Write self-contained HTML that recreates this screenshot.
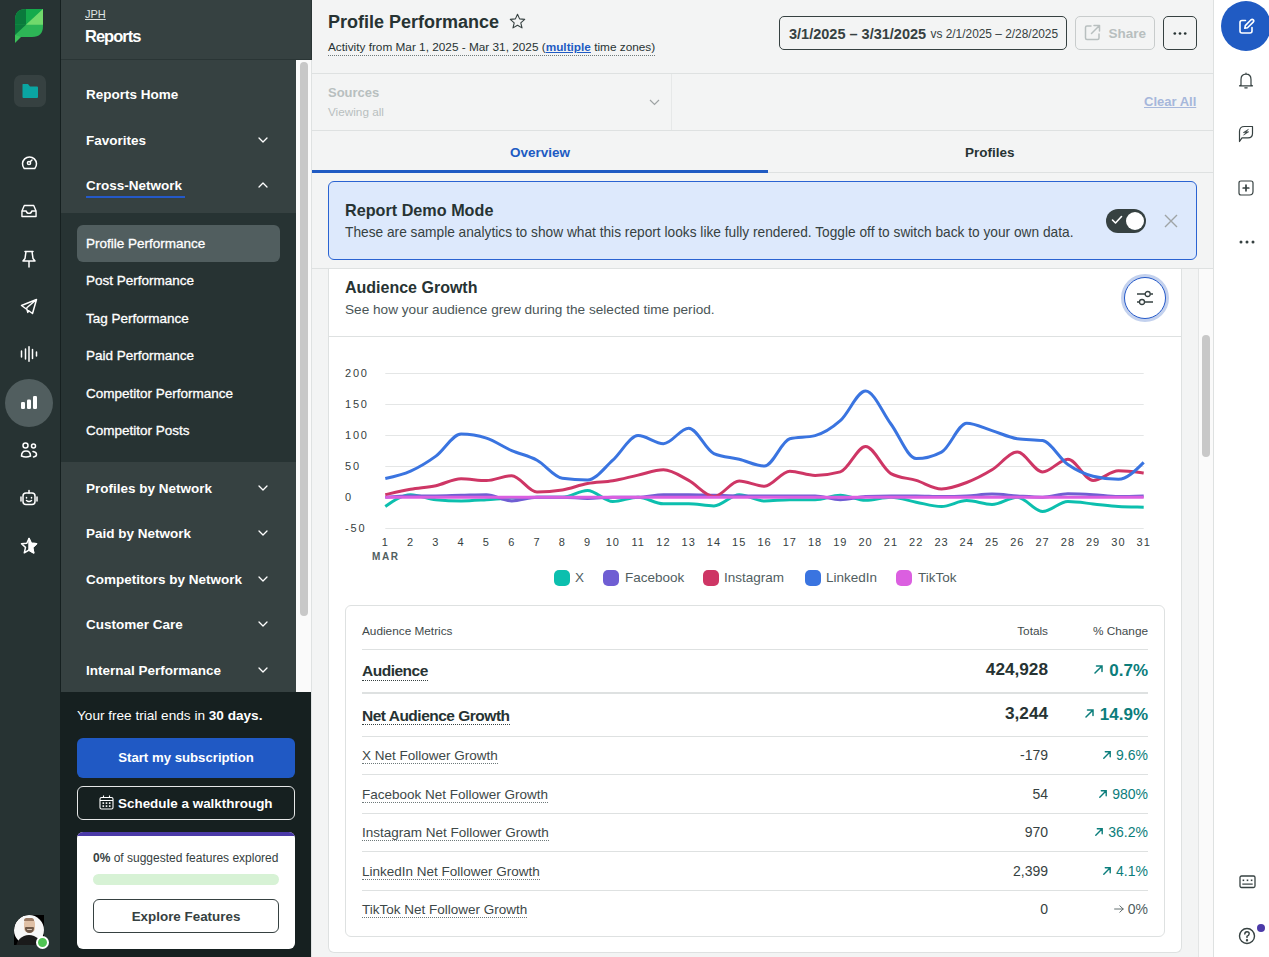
<!DOCTYPE html>
<html><head><meta charset="utf-8">
<style>
*{box-sizing:border-box;margin:0;padding:0}
html,body{width:1269px;height:957px;overflow:hidden;background:#f3f4f4;font-family:"Liberation Sans",sans-serif;}
.abs{position:absolute}
.t{position:absolute;white-space:nowrap;line-height:1}
#rail{left:0;top:0;width:61px;height:957px;background:#273333;border-right:1px solid #162020}
#panel{left:61px;top:0;width:250px;height:957px;background:#364141;overflow:hidden}
#main{left:311px;top:0;width:902px;height:957px;background:#f3f4f4;overflow:hidden}
#rrail{left:1213px;top:0;width:56px;height:957px;background:#fff;border-left:1px solid #dee1e1}
.nv{color:#fff;font-weight:bold;font-size:13.5px;left:25px}
.sub{color:#fff;font-size:13.5px;left:25px;-webkit-text-stroke:0.3px #fff}
.chev{position:absolute;left:197px;width:10px;height:6px}
</style></head><body>
<div id="rail" class="abs">
  <svg class="abs" style="left:15px;top:9px" width="28" height="34" viewBox="0 0 28 34">
    <defs><clipPath id="lc"><path d="M0 11 Q0 0 11 0 L28 0 L28 17 Q28 28 17 28 L0 28 Z"/></clipPath></defs>
    <g clip-path="url(#lc)">
      <rect x="0" y="0" width="28" height="28" fill="#2db556"/>
      <path d="M0 0 L11 0 L11 15.8 L0 15.8 Z" fill="#0a7a3c"/>
      <path d="M11 0 L28 0 L11 15.8 Z" fill="#15aa4c"/>
      <path d="M28 0 L28 15.8 L11 15.8 Z" fill="#72d96c"/>
      <path d="M0 15.8 L11 15.8 L0 26 Z" fill="#0a7a3c"/>
    </g>
    <path d="M0 26 L0 34 L6 28 Z" fill="#3cc25a"/>
  </svg>
  <div class="abs" style="left:14px;top:75px;width:32px;height:32px;border-radius:7px;background:#364141"></div>
  <svg class="abs" style="left:21px;top:83px" width="18" height="16" viewBox="0 0 18 16"><path d="M1.5 1.5 Q1.5 1 2 1 L7 1 L9 3.5 L16 3.5 Q17 3.5 17 4.5 L17 14 Q17 15 16 15 L2.5 15 Q1.5 15 1.5 14 Z" fill="#0aa5a2"/></svg>
  <svg class="abs" style="left:20.5px;top:154px" width="17" height="17" viewBox="0 0 17 17" fill="none" stroke="#fff" stroke-width="1.5" stroke-linecap="round"><path d="M3.2 14.5 A7 7 0 1 1 13.8 14.5 Z"/><circle cx="8" cy="9" r="1.6"/><path d="M9.2 7.8 L11 6"/></svg>
  <svg class="abs" style="left:21px;top:204px" width="16" height="14" viewBox="0 0 17 14" fill="none" stroke="#fff" stroke-width="1.5" stroke-linejoin="round"><path d="M1 7 L3.5 1.2 L13.5 1.2 L16 7 L16 12.8 L1 12.8 Z"/><path d="M1 7 L5.5 7 Q6 9.5 8.5 9.5 Q11 9.5 11.5 7 L16 7"/></svg>
  <svg class="abs" style="left:21px;top:250px" width="16" height="18" viewBox="0 0 16 18" fill="none" stroke="#fff" stroke-width="1.5" stroke-linejoin="round" stroke-linecap="round"><path d="M4 1.5 L12 1.5 M5 1.5 L4 8.5 L2 11 L14 11 L12 8.5 L11 1.5 M8 11 L8 17"/></svg>
  <svg class="abs" style="left:20px;top:298px" width="18" height="17" viewBox="0 0 18 17" fill="none" stroke="#fff" stroke-width="1.5" stroke-linejoin="round"><path d="M1.5 7.5 L16.5 1.5 L12.5 15.5 Z M6.5 10 L16.5 1.5 M6.5 10 L8 15"/></svg>
  <svg class="abs" style="left:20px;top:346px" width="18" height="16" viewBox="0 0 18 16" stroke="#fff" stroke-width="1.5" stroke-linecap="round"><path d="M1.5 5 L1.5 11 M5.5 3 L5.5 13 M9 0.8 L9 15.2 M12.5 3.5 L12.5 12.5 M16.5 6 L16.5 10"/></svg>
  <div class="abs" style="left:5px;top:379px;width:48px;height:48px;border-radius:50%;background:#515e5f"></div>
  <svg class="abs" style="left:21px;top:396px" width="16" height="13" viewBox="0 0 16 13" fill="#fff"><rect x="0" y="6" width="4" height="7" rx="1.2"/><rect x="6" y="3.5" width="4" height="9.5" rx="1.2"/><rect x="12" y="0" width="4" height="13" rx="1.2"/></svg>
  <svg class="abs" style="left:20px;top:442px" width="18" height="17" viewBox="0 0 18 17" fill="none" stroke="#fff" stroke-width="1.5" stroke-linecap="round"><circle cx="5.5" cy="3.5" r="2.5"/><circle cx="13.5" cy="4" r="2"/><path d="M1.5 14 Q1.5 9 6 9 Q10.5 9 10.5 14 Q6 16 1.5 14 Z"/><path d="M13 9.5 Q16.5 10 16.5 12.5 Q16.5 14.5 13.5 15"/></svg>
  <svg class="abs" style="left:20px;top:489px" width="18" height="18" viewBox="0 0 18 18" fill="none" stroke="#fff" stroke-width="1.5" stroke-linecap="round"><rect x="3" y="4" width="12" height="11.5" rx="3"/><path d="M9 1.5 L9 4 M1 8 L1 12 M17 8 L17 12 M6.5 8.5 L6.5 9 M11.5 8.5 L11.5 9 M6.5 11.5 Q9 13.5 11.5 11.5"/></svg>
  <svg class="abs" style="left:20px;top:537px" width="18" height="18" viewBox="0 0 18 18" fill="none" stroke="#fff" stroke-width="1.5" stroke-linejoin="round"><path d="M9 1.5 L11.2 6.3 L16.5 6.8 L12.5 10.4 L13.7 15.8 L9 13 L4.3 15.8 L5.5 10.4 L1.5 6.8 L6.8 6.3 Z"/><path d="M9 1.5 L11.2 6.3 L16.5 6.8 L12.5 10.4 L13.7 15.8 L9 13 Z" fill="#fff"/></svg>
  <div class="abs" style="left:14px;top:915px;width:30px;height:30px;border-radius:15px 0 0 0;background:#000;overflow:hidden">
    <div class="abs" style="left:0;top:0;width:30px;height:30px;border-radius:50%;background:#f7f7f7"></div>
    <div class="abs" style="left:9.5px;top:3px;width:11px;height:15px;border-radius:5.5px 5.5px 5px 5px;background:#dfc0a6"></div>
    <div class="abs" style="left:10px;top:2.5px;width:10px;height:3.5px;border-radius:5px 5px 1px 1px;background:#9a7a64"></div>
    <div class="abs" style="left:10.5px;top:12px;width:9px;height:6px;border-radius:1px 1px 4.5px 4.5px;background:#6e5848"></div>
    <div class="abs" style="left:12.5px;top:13.5px;width:5px;height:1.5px;border-radius:1px;background:#d8c6b8"></div>
    <div class="abs" style="left:2px;top:19.5px;width:26px;height:14px;border-radius:13px 13px 0 0;background:#1a1a1a"></div>
  </div>
  <div class="abs" style="left:35.5px;top:936px;width:13px;height:13px;border-radius:50%;background:#4fc452;border:2px solid #fff"></div>
</div>
<div id="panel" class="abs">
  <div class="abs" style="left:0;top:0;width:250px;height:60px;background:#364141;border-bottom:1px solid #2a3535"></div>
  <div class="t" style="left:24px;top:9px;font-size:11px;color:#dfe3e3;text-decoration:underline">JPH</div>
  <div class="t" style="left:24px;top:28px;font-size:16.5px;color:#fff;font-weight:bold;letter-spacing:-1px">Reports</div>
  <div class="abs" style="left:0;top:213px;width:235px;height:249px;background:#273333"></div>
  <div class="t nv" style="top:88px">Reports Home</div>
  <div class="t nv" style="top:134px">Favorites</div>
  <div class="t nv" style="top:179px">Cross-Network</div>
  <div class="abs" style="left:25px;top:196px;width:99px;height:2px;background:#2459c9"></div>
  <div class="abs" style="left:16px;top:225px;width:203px;height:37px;background:#515e5f;border-radius:6px"></div>
  <div class="t sub" style="top:237px">Profile Performance</div>
  <div class="t sub" style="top:274px">Post Performance</div>
  <div class="t sub" style="top:312px">Tag Performance</div>
  <div class="t sub" style="top:349px">Paid Performance</div>
  <div class="t sub" style="top:387px">Competitor Performance</div>
  <div class="t sub" style="top:424px">Competitor Posts</div>
  <div class="t nv" style="top:482px">Profiles by Network</div>
  <div class="t nv" style="top:527px">Paid by Network</div>
  <div class="t nv" style="top:573px">Competitors by Network</div>
  <div class="t nv" style="top:618px">Customer Care</div>
  <div class="t nv" style="top:664px">Internal Performance</div>
  <div class="abs" style="left:235px;top:60px;width:15px;height:632px;background:#fafafa"></div>
  <div class="abs" style="left:239px;top:62px;width:8px;height:554px;background:#c8c8c8;border-radius:4px"></div>
  <svg class="abs" style="left:197px;top:137px" width="11" height="7" viewBox="0 0 11 7" fill="none" stroke="#fff" stroke-width="1.3" stroke-linecap="round" stroke-linejoin="round"><path d="M1 1 L5 5 L9 1"/></svg>
  <svg class="abs" style="left:197px;top:182px" width="11" height="7" viewBox="0 0 11 7" fill="none" stroke="#fff" stroke-width="1.3" stroke-linecap="round" stroke-linejoin="round"><path d="M1 5 L5 1 L9 5"/></svg>
  <svg class="abs" style="left:197px;top:485px" width="11" height="7" viewBox="0 0 11 7" fill="none" stroke="#fff" stroke-width="1.3" stroke-linecap="round" stroke-linejoin="round"><path d="M1 1 L5 5 L9 1"/></svg>
  <svg class="abs" style="left:197px;top:530px" width="11" height="7" viewBox="0 0 11 7" fill="none" stroke="#fff" stroke-width="1.3" stroke-linecap="round" stroke-linejoin="round"><path d="M1 1 L5 5 L9 1"/></svg>
  <svg class="abs" style="left:197px;top:576px" width="11" height="7" viewBox="0 0 11 7" fill="none" stroke="#fff" stroke-width="1.3" stroke-linecap="round" stroke-linejoin="round"><path d="M1 1 L5 5 L9 1"/></svg>
  <svg class="abs" style="left:197px;top:621px" width="11" height="7" viewBox="0 0 11 7" fill="none" stroke="#fff" stroke-width="1.3" stroke-linecap="round" stroke-linejoin="round"><path d="M1 1 L5 5 L9 1"/></svg>
  <svg class="abs" style="left:197px;top:667px" width="11" height="7" viewBox="0 0 11 7" fill="none" stroke="#fff" stroke-width="1.3" stroke-linecap="round" stroke-linejoin="round"><path d="M1 1 L5 5 L9 1"/></svg>
  <div class="abs" style="left:0;top:692px;width:250px;height:265px;background:#162020"></div>
  <div class="t" style="left:16px;top:709px;font-size:13.6px;color:#fff">Your free trial ends in <b>30 days.</b></div>
  <div class="abs" style="left:16px;top:738px;width:218px;height:40px;border-radius:6px;background:#2059c4"></div>
  <div class="t" style="left:16px;top:751px;width:218px;text-align:center;font-size:13.2px;font-weight:bold;color:#fff">Start my subscription</div>
  <div class="abs" style="left:16px;top:786px;width:218px;height:34px;border-radius:6px;border:1px solid #e6e8e8"></div>
  <svg class="abs" style="left:37.5px;top:795px" width="15" height="15" viewBox="0 0 15 15" fill="none" stroke="#fff" stroke-width="1.1"><rect x="1" y="2.5" width="13" height="11.5" rx="1.5"/><path d="M1 5.5 L14 5.5 M4.5 0.5 L4.5 3 M10.5 0.5 L10.5 3"/><g fill="#fff" stroke="none"><rect x="3.5" y="7.3" width="1.6" height="1.6"/><rect x="6.7" y="7.3" width="1.6" height="1.6"/><rect x="9.9" y="7.3" width="1.6" height="1.6"/><rect x="3.5" y="10.3" width="1.6" height="1.6"/><rect x="6.7" y="10.3" width="1.6" height="1.6"/><rect x="9.9" y="10.3" width="1.6" height="1.6"/></g></svg>
  <div class="t" style="left:57px;top:797px;font-size:13.45px;font-weight:bold;color:#fff">Schedule a walkthrough</div>
  <div class="abs" style="left:16px;top:832px;width:218px;height:117px;border-radius:6px;background:#fff;overflow:hidden"><div class="abs" style="left:0;top:0;width:218px;height:4px;background:#4b3aa8"></div></div>
  <div class="t" style="left:32px;top:852px;font-size:12px;color:#364141"><b>0%</b> of suggested features explored</div>
  <div class="abs" style="left:32px;top:874px;width:186px;height:11px;border-radius:6px;background:#d7f2d5"></div>
  <div class="abs" style="left:32px;top:899px;width:186px;height:34px;border-radius:6px;border:1px solid #364141"></div>
  <div class="t" style="left:32px;top:910px;width:186px;text-align:center;font-size:13.4px;font-weight:bold;color:#364141">Explore Features</div>
</div>
<div id="main" class="abs">
  <div class="abs" style="left:0;top:60px;width:1px;height:897px;background:#dfe2e2"></div>
  <div class="abs" style="left:0;top:0;width:1px;height:60px;background:#2a3535"></div>
  <div class="t" style="left:17px;top:13px;font-size:18px;font-weight:bold;color:#273333">Profile Performance</div>
  <svg class="abs" style="left:197.5px;top:13px" width="17" height="17" viewBox="0 0 17 17" fill="none" stroke="#364141" stroke-width="1.1" stroke-linejoin="round"><path d="M8.5 1.2 L10.6 5.9 L15.7 6.4 L11.8 9.8 L13 14.9 L8.5 12.2 L4 14.9 L5.2 9.8 L1.3 6.4 L6.4 5.9 Z"/></svg>
  <div class="t" style="left:17px;top:42px;font-size:11.8px;color:#273333;border-bottom:1px dotted #6e797a;padding-bottom:1px">Activity from Mar 1, 2025 - Mar 31, 2025 (<b style="color:#205bc3;text-decoration:underline">multiple</b> time zones)</div>
  <div class="abs" style="left:468px;top:16px;width:288px;height:34px;border:1px solid #364141;border-radius:5px"></div>
  <div class="t" style="left:478px;top:27px;font-size:14.5px;font-weight:bold;color:#364141">3/1/2025 – 3/31/2025</div><div class="t" style="left:619.5px;top:29px;font-size:11.9px;color:#364141">vs 2/1/2025 – 2/28/2025</div>
  <div class="abs" style="left:764px;top:16px;width:80px;height:34px;border:1px solid #c8cccc;border-radius:5px"></div>
  <svg class="abs" style="left:773px;top:24px" width="17" height="17" viewBox="0 0 17 17" fill="none" stroke="#b8bfbf" stroke-width="1.5" stroke-linecap="round" stroke-linejoin="round"><path d="M7 2 L3 2 Q1.5 2 1.5 3.5 L1.5 14 Q1.5 15.5 3 15.5 L13.5 15.5 Q15 15.5 15 14 L15 10"/><path d="M10 1.5 L15.5 1.5 L15.5 7 M15.5 1.5 L7.5 9.5"/></svg>
  <div class="t" style="left:797.5px;top:27px;font-size:13.5px;font-weight:bold;color:#b8bfbf">Share</div>
  <div class="abs" style="left:852px;top:16px;width:34px;height:34px;border:1px solid #364141;border-radius:5px"></div>
  <svg class="abs" style="left:861px;top:30.5px" width="16" height="5" viewBox="0 0 16 5" fill="#273333"><circle cx="2.8" cy="2.5" r="1.35"/><circle cx="8" cy="2.5" r="1.35"/><circle cx="13.2" cy="2.5" r="1.35"/></svg>
  <div class="abs" style="left:1px;top:73px;width:901px;height:1px;background:#dee1e1"></div>
  <div class="t" style="left:17px;top:86px;font-size:13px;font-weight:bold;color:#b8bfbf">Sources</div>
  <div class="t" style="left:17px;top:106px;font-size:11.75px;color:#b8bfbf">Viewing all</div>
  <svg class="abs" style="left:338px;top:98.5px" width="11" height="7" viewBox="0 0 11 7" fill="none" stroke="#9fa4a5" stroke-width="1.2"><path d="M1 1 L5.5 5.5 L10 1"/></svg>
  <div class="abs" style="left:360px;top:74px;width:1px;height:56px;background:#e6e8e8"></div>
  <div class="t" style="left:833px;top:95px;font-size:13px;font-weight:bold;color:#a6b7db;text-decoration:underline">Clear All</div>
  <div class="abs" style="left:1px;top:130px;width:901px;height:1px;background:#dee1e1"></div>
  <div class="t" style="left:199px;top:146px;font-size:13.5px;font-weight:bold;color:#205bc3">Overview</div>
  <div class="t" style="left:654px;top:146px;font-size:13.5px;font-weight:bold;color:#273333">Profiles</div>
  <div class="abs" style="left:1px;top:172px;width:901px;height:1px;background:#dee1e1"></div>
  <div class="abs" style="left:1px;top:170px;width:456px;height:3px;background:#205bc3"></div>
  <div class="abs" style="left:17px;top:181px;width:869px;height:79px;border:1px solid #2a63d2;border-radius:6px;background:#dde9fc"></div>
  <div class="t" style="left:34px;top:202px;font-size:16.2px;font-weight:bold;color:#273333">Report Demo Mode</div>
  <div class="t" style="left:34px;top:226px;font-size:13.73px;color:#364141">These are sample analytics to show what this report looks like fully rendered. Toggle off to switch back to your own data.</div>
  <div class="abs" style="left:795px;top:209px;width:40px;height:24px;border-radius:12px;background:#364141"></div>
  <div class="abs" style="left:815px;top:212px;width:18px;height:18px;border-radius:50%;background:#fff"></div>
  <svg class="abs" style="left:800px;top:215px" width="12" height="10" viewBox="0 0 12 10" fill="none" stroke="#fff" stroke-width="1.6" stroke-linecap="round" stroke-linejoin="round"><path d="M1.5 5 L4.5 8 L10.5 1.5"/></svg>
  <svg class="abs" style="left:853px;top:214px" width="14" height="14" viewBox="0 0 14 14" stroke="#9fa4a5" stroke-width="1.4"><path d="M1 1 L13 13 M13 1 L1 13"/></svg>
  <div class="abs" style="left:1px;top:268px;width:901px;height:1px;background:#dee1e1"></div>
  <div class="abs" style="left:17px;top:269px;width:854px;height:684px;background:#fff;border:1px solid #dee1e1;border-top:none;border-radius:0 0 6px 6px"></div>
  <div class="t" style="left:34px;top:280px;font-size:16px;font-weight:bold;color:#273333">Audience Growth</div>
  <div class="t" style="left:34px;top:303px;font-size:13.64px;color:#4a5556">See how your audience grew during the selected time period.</div>
  <div class="abs" style="left:810px;top:273.5px;width:48px;height:48px;border-radius:50%;background:#c3d1ee"></div>
  <div class="abs" style="left:813px;top:276.5px;width:42px;height:42px;border-radius:50%;background:#fff;border:1.5px solid #2459c9"></div>
  <svg class="abs" style="left:825px;top:289px" width="18" height="18" viewBox="0 0 18 18" fill="none" stroke="#364141" stroke-width="1.3"><path d="M1 5 L9.2 5 M14.2 5 L17 5 M1 13 L3.5 13 M8.5 13 L17 13"/><circle cx="11.7" cy="5" r="2.5"/><circle cx="6" cy="13" r="2.5"/></svg>
  <div class="abs" style="left:18px;top:336px;width:852px;height:1px;background:#dee1e1"></div>
    <div class="t" style="left:34px;top:368px;font-size:11px;color:#364141;letter-spacing:1.8px;line-height:11px">200</div>
  <div class="t" style="left:34px;top:399px;font-size:11px;color:#364141;letter-spacing:1.8px;line-height:11px">150</div>
  <div class="t" style="left:34px;top:430px;font-size:11px;color:#364141;letter-spacing:1.8px;line-height:11px">100</div>
  <div class="t" style="left:34px;top:461px;font-size:11px;color:#364141;letter-spacing:1.8px;line-height:11px">50</div>
  <div class="t" style="left:34px;top:492px;font-size:11px;color:#364141;letter-spacing:1.8px;line-height:11px">0</div>
  <div class="t" style="left:34px;top:523px;font-size:11px;color:#364141;letter-spacing:1.8px;line-height:11px">-50</div>

  <svg class="abs" style="left:0;top:0" width="902" height="957" viewBox="0 0 902 957">
<line x1="74.3" y1="373.5" x2="832.7" y2="373.5" stroke="#e4e6e6" stroke-width="1"/>
<line x1="74.3" y1="404.5" x2="832.7" y2="404.5" stroke="#e4e6e6" stroke-width="1"/>
<line x1="74.3" y1="435.5" x2="832.7" y2="435.5" stroke="#e4e6e6" stroke-width="1"/>
<line x1="74.3" y1="466.5" x2="832.7" y2="466.5" stroke="#e4e6e6" stroke-width="1"/>
<line x1="74.3" y1="497.5" x2="832.7" y2="497.5" stroke="#e4e6e6" stroke-width="1"/>
<line x1="74.3" y1="528.5" x2="832.7" y2="528.5" stroke="#e4e6e6" stroke-width="1"/>
<path d="M74.3 506.5 C82.7 500.6 91.2 494.7 99.6 494.7 C108.0 494.7 116.4 498.9 124.9 499.7 C133.3 500.5 141.7 500.9 150.1 500.9 C158.6 500.9 167.0 500.2 175.4 499.7 C183.8 499.2 192.3 498.5 200.7 498.1 C209.1 497.7 217.6 497.2 226.0 497.2 C234.4 497.2 242.8 497.2 251.3 497.2 C259.7 497.2 268.1 490.4 276.5 490.4 C285.0 490.4 293.4 501.6 301.8 501.6 C310.2 501.6 318.7 497.2 327.1 497.2 C335.5 497.2 344.0 503.8 352.4 503.8 C360.8 503.8 369.2 503.8 377.7 503.8 C386.1 503.8 394.5 505.9 402.9 505.9 C411.4 505.9 419.8 494.7 428.2 494.7 C436.6 494.7 445.1 500.9 453.5 500.9 C461.9 500.9 470.4 499.7 478.8 499.7 C487.2 499.7 495.6 499.7 504.1 499.7 C512.5 499.7 520.9 495.3 529.3 495.3 C537.8 495.3 546.2 500.3 554.6 500.3 C563.0 500.3 571.5 497.2 579.9 497.2 C588.3 497.2 596.8 500.6 605.2 502.2 C613.6 503.7 622.0 506.5 630.5 506.5 C638.9 506.5 647.3 500.6 655.7 500.6 C664.2 500.6 672.6 504.5 681.0 504.5 C689.4 504.5 697.9 497.2 706.3 497.2 C714.7 497.2 723.2 511.5 731.6 511.5 C740.0 511.5 748.4 501.6 756.9 501.6 C765.3 501.6 773.7 503.0 782.1 503.9 C790.6 504.7 799.0 506.1 807.4 506.5 C815.8 506.9 824.3 507.0 832.7 507.2" fill="none" stroke="#0cbfae" stroke-width="3" stroke-linejoin="round" stroke-linecap="butt"/>
<path d="M74.3 497.2 C82.7 496.6 91.2 496.0 99.6 496.0 C108.0 496.0 116.4 496.0 124.9 496.0 C133.3 496.0 141.7 495.5 150.1 495.3 C158.6 495.1 167.0 494.7 175.4 494.7 C183.8 494.7 192.3 500.9 200.7 500.9 C209.1 500.9 217.6 497.2 226.0 497.2 C234.4 497.2 242.8 497.2 251.3 497.2 C259.7 497.2 268.1 498.4 276.5 498.4 C285.0 498.4 293.4 497.2 301.8 497.2 C310.2 497.2 318.7 497.2 327.1 497.2 C335.5 497.2 344.0 494.7 352.4 494.7 C360.8 494.7 369.2 494.7 377.7 494.7 C386.1 494.7 394.5 495.1 402.9 495.3 C411.4 495.5 419.8 496.0 428.2 496.0 C436.6 496.0 445.1 496.0 453.5 496.0 C461.9 496.0 470.4 496.0 478.8 496.0 C487.2 496.0 495.6 496.0 504.1 496.0 C512.5 496.0 520.9 499.7 529.3 499.7 C537.8 499.7 546.2 497.0 554.6 496.6 C563.0 496.2 571.5 496.0 579.9 496.0 C588.3 496.0 596.8 496.0 605.2 496.0 C613.6 496.0 622.0 496.6 630.5 496.6 C638.9 496.6 647.3 496.4 655.7 496.0 C664.2 495.5 672.6 494.1 681.0 494.1 C689.4 494.1 697.9 495.4 706.3 496.0 C714.7 496.5 723.2 497.2 731.6 497.2 C740.0 497.2 748.4 493.8 756.9 493.8 C765.3 493.8 773.7 494.2 782.1 494.7 C790.6 495.2 799.0 496.6 807.4 496.6 C815.8 496.6 824.3 496.3 832.7 496.0" fill="none" stroke="#6f5ed3" stroke-width="3" stroke-linejoin="round" stroke-linecap="butt"/>
<path d="M74.3 494.7 C82.7 492.8 91.2 490.8 99.6 489.3 C108.0 487.8 116.4 487.5 124.9 485.7 C133.3 483.9 141.7 478.7 150.1 478.7 C158.6 478.7 167.0 480.6 175.4 480.6 C183.8 480.6 192.3 475.7 200.7 475.7 C209.1 475.7 217.6 492.1 226.0 492.1 C234.4 492.1 242.8 491.4 251.3 490.0 C259.7 488.6 268.1 485.1 276.5 483.6 C285.0 482.0 293.4 482.2 301.8 480.8 C310.2 479.4 318.7 476.9 327.1 475.1 C335.5 473.3 344.0 469.8 352.4 469.8 C360.8 469.8 369.2 475.9 377.7 480.4 C386.1 484.9 394.5 496.6 402.9 496.6 C411.4 496.6 419.8 481.0 428.2 481.0 C436.6 481.0 445.1 486.2 453.5 486.2 C461.9 486.2 470.4 471.2 478.8 471.2 C487.2 471.2 495.6 475.4 504.1 475.4 C512.5 475.4 520.9 474.2 529.3 471.9 C537.8 469.5 546.2 446.4 554.6 446.4 C563.0 446.4 571.5 469.0 579.9 473.6 C588.3 478.1 596.8 477.9 605.2 480.4 C613.6 483.0 622.0 488.9 630.5 488.9 C638.9 488.9 647.3 485.7 655.7 482.5 C664.2 479.3 672.6 474.9 681.0 469.8 C689.4 464.8 697.9 452.1 706.3 452.1 C714.7 452.1 723.2 471.9 731.6 471.9 C740.0 471.9 748.4 459.3 756.9 459.3 C765.3 459.3 773.7 480.4 782.1 480.4 C790.6 480.4 799.0 470.8 807.4 470.8 C815.8 470.8 824.3 471.9 832.7 472.9" fill="none" stroke="#ce3665" stroke-width="3" stroke-linejoin="round" stroke-linecap="butt"/>
<path d="M74.3 478.5 C82.7 476.7 91.2 474.8 99.6 471.1 C108.0 467.3 116.4 462.3 124.9 456.1 C133.3 450.0 141.7 434.0 150.1 434.0 C158.6 434.0 167.0 435.4 175.4 438.1 C183.8 440.8 192.3 446.9 200.7 450.6 C209.1 454.2 217.6 455.6 226.0 460.2 C234.4 464.8 242.8 477.0 251.3 478.2 C259.7 479.4 268.1 480.0 276.5 480.0 C285.0 480.0 293.4 467.6 301.8 460.2 C310.2 452.8 318.7 435.6 327.1 435.6 C335.5 435.6 344.0 443.7 352.4 443.7 C360.8 443.7 369.2 428.2 377.7 428.2 C386.1 428.2 394.5 449.9 402.9 453.7 C411.4 457.4 419.8 457.2 428.2 459.3 C436.6 461.3 445.1 466.1 453.5 466.1 C461.9 466.1 470.4 440.8 478.8 438.7 C487.2 436.7 495.6 437.7 504.1 435.6 C512.5 433.5 520.9 428.1 529.3 420.7 C537.8 413.3 546.2 391.1 554.6 391.1 C563.0 391.1 571.5 412.7 579.9 424.0 C588.3 435.2 596.8 458.6 605.2 458.6 C613.6 458.6 622.0 456.5 630.5 452.1 C638.9 447.8 647.3 423.2 655.7 423.2 C664.2 423.2 672.6 428.1 681.0 430.6 C689.4 433.2 697.9 437.5 706.3 438.7 C714.7 440.0 723.2 439.4 731.6 440.6 C740.0 441.8 748.4 458.6 756.9 464.5 C765.3 470.4 773.7 474.1 782.1 476.2 C790.6 478.3 799.0 479.3 807.4 479.3 C815.8 479.3 824.3 470.9 832.7 462.4" fill="none" stroke="#3a74e0" stroke-width="3" stroke-linejoin="round" stroke-linecap="butt"/>
<path d="M74.3 497.2 C82.7 497.2 91.2 497.2 99.6 497.2 C108.0 497.2 116.4 497.2 124.9 497.2 C133.3 497.2 141.7 497.2 150.1 497.2 C158.6 497.2 167.0 497.2 175.4 497.2 C183.8 497.2 192.3 497.2 200.7 497.2 C209.1 497.2 217.6 497.2 226.0 497.2 C234.4 497.2 242.8 497.2 251.3 497.2 C259.7 497.2 268.1 497.2 276.5 497.2 C285.0 497.2 293.4 497.2 301.8 497.2 C310.2 497.2 318.7 497.2 327.1 497.2 C335.5 497.2 344.0 497.2 352.4 497.2 C360.8 497.2 369.2 497.2 377.7 497.2 C386.1 497.2 394.5 497.2 402.9 497.2 C411.4 497.2 419.8 497.2 428.2 497.2 C436.6 497.2 445.1 497.2 453.5 497.2 C461.9 497.2 470.4 497.2 478.8 497.2 C487.2 497.2 495.6 497.2 504.1 497.2 C512.5 497.2 520.9 497.2 529.3 497.2 C537.8 497.2 546.2 497.2 554.6 497.2 C563.0 497.2 571.5 497.2 579.9 497.2 C588.3 497.2 596.8 497.2 605.2 497.2 C613.6 497.2 622.0 497.2 630.5 497.2 C638.9 497.2 647.3 497.2 655.7 497.2 C664.2 497.2 672.6 497.2 681.0 497.2 C689.4 497.2 697.9 497.2 706.3 497.2 C714.7 497.2 723.2 497.2 731.6 497.2 C740.0 497.2 748.4 497.2 756.9 497.2 C765.3 497.2 773.7 497.2 782.1 497.2 C790.6 497.2 799.0 497.2 807.4 497.2 C815.8 497.2 824.3 497.2 832.7 497.2" fill="none" stroke="#db5fe0" stroke-width="3" stroke-linejoin="round" stroke-linecap="butt"/>
</svg>
    <div class="t" style="left:74.3px;top:537px;width:30px;margin-left:-15px;text-align:center;font-size:11px;color:#364141;letter-spacing:1px">1</div>
  <div class="t" style="left:99.6px;top:537px;width:30px;margin-left:-15px;text-align:center;font-size:11px;color:#364141;letter-spacing:1px">2</div>
  <div class="t" style="left:124.9px;top:537px;width:30px;margin-left:-15px;text-align:center;font-size:11px;color:#364141;letter-spacing:1px">3</div>
  <div class="t" style="left:150.1px;top:537px;width:30px;margin-left:-15px;text-align:center;font-size:11px;color:#364141;letter-spacing:1px">4</div>
  <div class="t" style="left:175.4px;top:537px;width:30px;margin-left:-15px;text-align:center;font-size:11px;color:#364141;letter-spacing:1px">5</div>
  <div class="t" style="left:200.7px;top:537px;width:30px;margin-left:-15px;text-align:center;font-size:11px;color:#364141;letter-spacing:1px">6</div>
  <div class="t" style="left:226.0px;top:537px;width:30px;margin-left:-15px;text-align:center;font-size:11px;color:#364141;letter-spacing:1px">7</div>
  <div class="t" style="left:251.3px;top:537px;width:30px;margin-left:-15px;text-align:center;font-size:11px;color:#364141;letter-spacing:1px">8</div>
  <div class="t" style="left:276.5px;top:537px;width:30px;margin-left:-15px;text-align:center;font-size:11px;color:#364141;letter-spacing:1px">9</div>
  <div class="t" style="left:301.8px;top:537px;width:30px;margin-left:-15px;text-align:center;font-size:11px;color:#364141;letter-spacing:1px">10</div>
  <div class="t" style="left:327.1px;top:537px;width:30px;margin-left:-15px;text-align:center;font-size:11px;color:#364141;letter-spacing:1px">11</div>
  <div class="t" style="left:352.4px;top:537px;width:30px;margin-left:-15px;text-align:center;font-size:11px;color:#364141;letter-spacing:1px">12</div>
  <div class="t" style="left:377.7px;top:537px;width:30px;margin-left:-15px;text-align:center;font-size:11px;color:#364141;letter-spacing:1px">13</div>
  <div class="t" style="left:402.9px;top:537px;width:30px;margin-left:-15px;text-align:center;font-size:11px;color:#364141;letter-spacing:1px">14</div>
  <div class="t" style="left:428.2px;top:537px;width:30px;margin-left:-15px;text-align:center;font-size:11px;color:#364141;letter-spacing:1px">15</div>
  <div class="t" style="left:453.5px;top:537px;width:30px;margin-left:-15px;text-align:center;font-size:11px;color:#364141;letter-spacing:1px">16</div>
  <div class="t" style="left:478.8px;top:537px;width:30px;margin-left:-15px;text-align:center;font-size:11px;color:#364141;letter-spacing:1px">17</div>
  <div class="t" style="left:504.1px;top:537px;width:30px;margin-left:-15px;text-align:center;font-size:11px;color:#364141;letter-spacing:1px">18</div>
  <div class="t" style="left:529.3px;top:537px;width:30px;margin-left:-15px;text-align:center;font-size:11px;color:#364141;letter-spacing:1px">19</div>
  <div class="t" style="left:554.6px;top:537px;width:30px;margin-left:-15px;text-align:center;font-size:11px;color:#364141;letter-spacing:1px">20</div>
  <div class="t" style="left:579.9px;top:537px;width:30px;margin-left:-15px;text-align:center;font-size:11px;color:#364141;letter-spacing:1px">21</div>
  <div class="t" style="left:605.2px;top:537px;width:30px;margin-left:-15px;text-align:center;font-size:11px;color:#364141;letter-spacing:1px">22</div>
  <div class="t" style="left:630.5px;top:537px;width:30px;margin-left:-15px;text-align:center;font-size:11px;color:#364141;letter-spacing:1px">23</div>
  <div class="t" style="left:655.7px;top:537px;width:30px;margin-left:-15px;text-align:center;font-size:11px;color:#364141;letter-spacing:1px">24</div>
  <div class="t" style="left:681.0px;top:537px;width:30px;margin-left:-15px;text-align:center;font-size:11px;color:#364141;letter-spacing:1px">25</div>
  <div class="t" style="left:706.3px;top:537px;width:30px;margin-left:-15px;text-align:center;font-size:11px;color:#364141;letter-spacing:1px">26</div>
  <div class="t" style="left:731.6px;top:537px;width:30px;margin-left:-15px;text-align:center;font-size:11px;color:#364141;letter-spacing:1px">27</div>
  <div class="t" style="left:756.9px;top:537px;width:30px;margin-left:-15px;text-align:center;font-size:11px;color:#364141;letter-spacing:1px">28</div>
  <div class="t" style="left:782.1px;top:537px;width:30px;margin-left:-15px;text-align:center;font-size:11px;color:#364141;letter-spacing:1px">29</div>
  <div class="t" style="left:807.4px;top:537px;width:30px;margin-left:-15px;text-align:center;font-size:11px;color:#364141;letter-spacing:1px">30</div>
  <div class="t" style="left:832.7px;top:537px;width:30px;margin-left:-15px;text-align:center;font-size:11px;color:#364141;letter-spacing:1px">31</div>

  <div class="t" style="left:61px;top:552px;font-size:10px;font-weight:bold;color:#515e5f;letter-spacing:1.6px">MAR</div>
  <div class="abs" style="left:243px;top:570px;width:16px;height:16px;border-radius:5px;background:#0cbfae"></div>
  <div class="t" style="left:264px;top:571px;font-size:13.5px;color:#515e5f">X</div>
  <div class="abs" style="left:292px;top:570px;width:16px;height:16px;border-radius:5px;background:#6f5ed3"></div>
  <div class="t" style="left:314px;top:571px;font-size:13.5px;color:#515e5f">Facebook</div>
  <div class="abs" style="left:392px;top:570px;width:16px;height:16px;border-radius:5px;background:#ce3665"></div>
  <div class="t" style="left:413px;top:571px;font-size:13.5px;color:#515e5f">Instagram</div>
  <div class="abs" style="left:494px;top:570px;width:16px;height:16px;border-radius:5px;background:#3a74e0"></div>
  <div class="t" style="left:515px;top:571px;font-size:13.5px;color:#515e5f">LinkedIn</div>
  <div class="abs" style="left:585px;top:570px;width:16px;height:16px;border-radius:5px;background:#db5fe0"></div>
  <div class="t" style="left:607px;top:571px;font-size:13.5px;color:#515e5f">TikTok</div>
  <div class="abs" style="left:34px;top:605px;width:820px;height:332px;border:1px solid #dee1e1;border-radius:6px;background:#fff"></div>
  <div class="t" style="left:51px;color:#3f4a4b;top:626px;font-size:11.8px">Audience Metrics</div>
  <div class="t" style="right:165px;color:#3f4a4b;top:626px;font-size:11.8px">Totals</div>
  <div class="t" style="right:65px;color:#3f4a4b;top:626px;font-size:11.8px">% Change</div>
  <div class="abs" style="left:51px;top:649px;width:786px;height:1px;background:#dee1e1"></div>
  <div class="t" style="left:51px;letter-spacing:-0.5px;font-weight:bold;color:#273333;border-bottom:1px dotted #364141;padding-bottom:1px;top:663.4px;font-size:15.5px">Audience</div>
  <div class="t" style="right:165px;font-weight:bold;color:#273333;top:661.4px;font-size:17.2px">424,928</div>
  <div class="t" style="right:65px;font-weight:bold;color:#0b7d7b;top:661.6px;font-size:17px"><svg width="9" height="9" viewBox="0 0 9 9" style="vertical-align:baseline;position:relative;top:-1.2px;margin-right:6px" fill="none" stroke="#0b7d7b" stroke-width="1.5" stroke-linecap="round"><path d="M1 8 L8 1 M2.5 1 L8 1 L8 6.5"/></svg>0.7%</div>
  <div class="abs" style="left:51px;top:692px;width:786px;height:2px;background:#dee1e1"></div>
  <div class="t" style="left:51px;letter-spacing:-0.5px;font-weight:bold;color:#273333;border-bottom:1px dotted #364141;padding-bottom:1px;top:707.9px;font-size:15.5px">Net Audience Growth</div>
  <div class="t" style="right:165px;font-weight:bold;color:#273333;top:705.4px;font-size:17.2px">3,244</div>
  <div class="t" style="right:65px;font-weight:bold;color:#0b7d7b;top:705.6px;font-size:17px"><svg width="9" height="9" viewBox="0 0 9 9" style="vertical-align:baseline;position:relative;top:-1.2px;margin-right:6px" fill="none" stroke="#0b7d7b" stroke-width="1.5" stroke-linecap="round"><path d="M1 8 L8 1 M2.5 1 L8 1 L8 6.5"/></svg>14.9%</div>
  <div class="abs" style="left:51px;top:736px;width:786px;height:1px;background:#dee1e1"></div>
  <div class="t" style="left:51px;color:#3d4848;border-bottom:1px dotted #6e797a;padding-bottom:1px;top:748.8px;font-size:13.5px">X Net Follower Growth</div>
  <div class="t" style="right:165px;color:#364141;top:748.3px;font-size:14px">-179</div>
  <div class="t" style="right:65px;color:#0b7d7b;top:748.3px;font-size:14px"><svg width="8" height="8" viewBox="0 0 8 8" style="vertical-align:baseline;position:relative;top:-1.2px;margin-right:5px" fill="none" stroke="#0b7d7b" stroke-width="1.4" stroke-linecap="round"><path d="M0.8 7.2 L7.2 0.8 M2.3 0.8 L7.2 0.8 L7.2 5.7"/></svg>9.6%</div>
  <div class="abs" style="left:51px;top:774px;width:786px;height:1px;background:#dee1e1"></div>
  <div class="t" style="left:51px;color:#3d4848;border-bottom:1px dotted #6e797a;padding-bottom:1px;top:787.5px;font-size:13.5px">Facebook Net Follower Growth</div>
  <div class="t" style="right:165px;color:#364141;top:787.0px;font-size:14px">54</div>
  <div class="t" style="right:65px;color:#0b7d7b;top:787.0px;font-size:14px"><svg width="8" height="8" viewBox="0 0 8 8" style="vertical-align:baseline;position:relative;top:-1.2px;margin-right:5px" fill="none" stroke="#0b7d7b" stroke-width="1.4" stroke-linecap="round"><path d="M0.8 7.2 L7.2 0.8 M2.3 0.8 L7.2 0.8 L7.2 5.7"/></svg>980%</div>
  <div class="abs" style="left:51px;top:813px;width:786px;height:1px;background:#dee1e1"></div>
  <div class="t" style="left:51px;color:#3d4848;border-bottom:1px dotted #6e797a;padding-bottom:1px;top:825.8px;font-size:13.5px">Instagram Net Follower Growth</div>
  <div class="t" style="right:165px;color:#364141;top:825.3px;font-size:14px">970</div>
  <div class="t" style="right:65px;color:#0b7d7b;top:825.3px;font-size:14px"><svg width="8" height="8" viewBox="0 0 8 8" style="vertical-align:baseline;position:relative;top:-1.2px;margin-right:5px" fill="none" stroke="#0b7d7b" stroke-width="1.4" stroke-linecap="round"><path d="M0.8 7.2 L7.2 0.8 M2.3 0.8 L7.2 0.8 L7.2 5.7"/></svg>36.2%</div>
  <div class="abs" style="left:51px;top:851px;width:786px;height:1px;background:#dee1e1"></div>
  <div class="t" style="left:51px;color:#3d4848;border-bottom:1px dotted #6e797a;padding-bottom:1px;top:864.5px;font-size:13.5px">LinkedIn Net Follower Growth</div>
  <div class="t" style="right:165px;color:#364141;top:864.0px;font-size:14px">2,399</div>
  <div class="t" style="right:65px;color:#0b7d7b;top:864.0px;font-size:14px"><svg width="8" height="8" viewBox="0 0 8 8" style="vertical-align:baseline;position:relative;top:-1.2px;margin-right:5px" fill="none" stroke="#0b7d7b" stroke-width="1.4" stroke-linecap="round"><path d="M0.8 7.2 L7.2 0.8 M2.3 0.8 L7.2 0.8 L7.2 5.7"/></svg>4.1%</div>
  <div class="abs" style="left:51px;top:890px;width:786px;height:1px;background:#dee1e1"></div>
  <div class="t" style="left:51px;color:#3d4848;border-bottom:1px dotted #6e797a;padding-bottom:1px;top:902.9px;font-size:13.5px">TikTok Net Follower Growth</div>
  <div class="t" style="right:165px;color:#364141;top:902.4px;font-size:14px">0</div>
  <div class="t" style="right:65px;color:#515e5f;top:902.4px;font-size:14px"><svg width="10" height="8" viewBox="0 0 10 8" style="vertical-align:baseline;position:relative;top:-1.5px;margin-right:4px" fill="none" stroke="#515e5f" stroke-width="0.9" stroke-linecap="round" stroke-linejoin="round"><path d="M0.6 4 L9.2 4 M5.8 0.8 L9.2 4 L5.8 7.2"/></svg>0%</div>


  <div class="abs" style="left:887px;top:269px;width:1px;height:688px;background:#e3e5e5"></div>
  <div class="abs" style="left:888px;top:269px;width:14px;height:688px;background:#fafafa"></div>
  <div class="abs" style="left:891px;top:335px;width:8px;height:122px;background:#c8c8c8;border-radius:4px"></div>
</div>
<div id="rrail" class="abs">
  <div class="abs" style="left:7px;top:1px;width:50px;height:50px;border-radius:50%;background:#205bc3"></div>
  <svg class="abs" style="left:24px;top:18px" width="17" height="17" viewBox="0 0 17 17" fill="none" stroke="#fff" stroke-width="1.6" stroke-linejoin="round" stroke-linecap="round"><path d="M7.5 2.5 L4 2.5 Q2 2.5 2 4.5 L2 13 Q2 15 4 15 L12 15 Q14 15 14 13 L14 9.5"/><path d="M13 1.8 Q14.2 0.8 15.3 1.9 Q16.3 3 15.2 4.1 L9.5 9.8 L6.8 10.3 L7.3 7.6 Z"/></svg>
  <svg class="abs" style="left:24px;top:72px" width="16" height="17" viewBox="0 0 16 17" fill="none" stroke="#364141" stroke-width="1.2" stroke-linecap="round" stroke-linejoin="round"><path d="M3 13 L3 7.5 Q3 2.2 8 2.2 Q13 2.2 13 7.5 L13 13 Q13.8 13.6 14.5 13.8 L1.5 13.8 Q2.2 13.6 3 13 Z M8 1 L8 2.2 M6.8 15.8 L9.2 15.8"/></svg>
  <svg class="abs" style="left:24px;top:125px" width="16" height="18" viewBox="0 0 16 18" fill="none" stroke="#364141" stroke-width="1.2" stroke-linejoin="round"><path d="M1.5 16.5 L1.5 6.5 Q1.5 1.5 6.5 1.5 L14.5 1.5 L14.5 8.5 Q14.5 12.8 10 12.8 L4 12.8 Z"/><path d="M10.5 4.2 L5.2 7.6 L8 7.6 L5.5 10.2 L10.8 6.8 L8 6.8 Z" fill="#364141" stroke-width="0.5"/></svg>
  <svg class="abs" style="left:24px;top:180px" width="16" height="16" viewBox="0 0 16 16" fill="none" stroke="#364141" stroke-width="1.2" stroke-linecap="round"><path d="M3 1 L13 1 Q15 1 15 3 L15 11.5 Q15 15 11.5 15 L3 15 Q1 15 1 13 L1 3 Q1 1 3 1 Z"/><path d="M8 5.2 L8 10.8 M5.2 8 L10.8 8" stroke-width="1.7"/></svg>
  <svg class="abs" style="left:25px;top:240px" width="16" height="4" viewBox="0 0 16 4" fill="#364141"><circle cx="2" cy="2" r="1.5"/><circle cx="8" cy="2" r="1.5"/><circle cx="14" cy="2" r="1.5"/></svg>
  <svg class="abs" style="left:24.5px;top:875px" width="17" height="14" viewBox="0 0 17 14" fill="none" stroke="#364141" stroke-width="1.3"><rect x="1" y="1" width="15" height="11.5" rx="1.5"/><g fill="#364141" stroke="none"><rect x="3.6" y="4.5" width="1.6" height="1.6"/><rect x="7.7" y="4.5" width="1.6" height="1.6"/><rect x="11.8" y="4.5" width="1.6" height="1.6"/><rect x="3.3" y="8.5" width="10.4" height="1.2"/></g></svg>
  <svg class="abs" style="left:23.5px;top:927px" width="18" height="18" viewBox="0 0 18 18" fill="none" stroke="#364141" stroke-width="1.4" stroke-linecap="round"><circle cx="9" cy="9" r="7.5"/><path d="M6.8 7 Q6.8 4.8 9 4.8 Q11.2 4.8 11.2 6.8 Q11.2 8.3 9 9.3 L9 10.5"/><circle cx="9" cy="13.2" r="0.5" fill="#364141"/></svg>
  <div class="abs" style="left:43px;top:924px;width:8px;height:8px;border-radius:50%;background:#4b3aa8"></div>
</div>
</body></html>
